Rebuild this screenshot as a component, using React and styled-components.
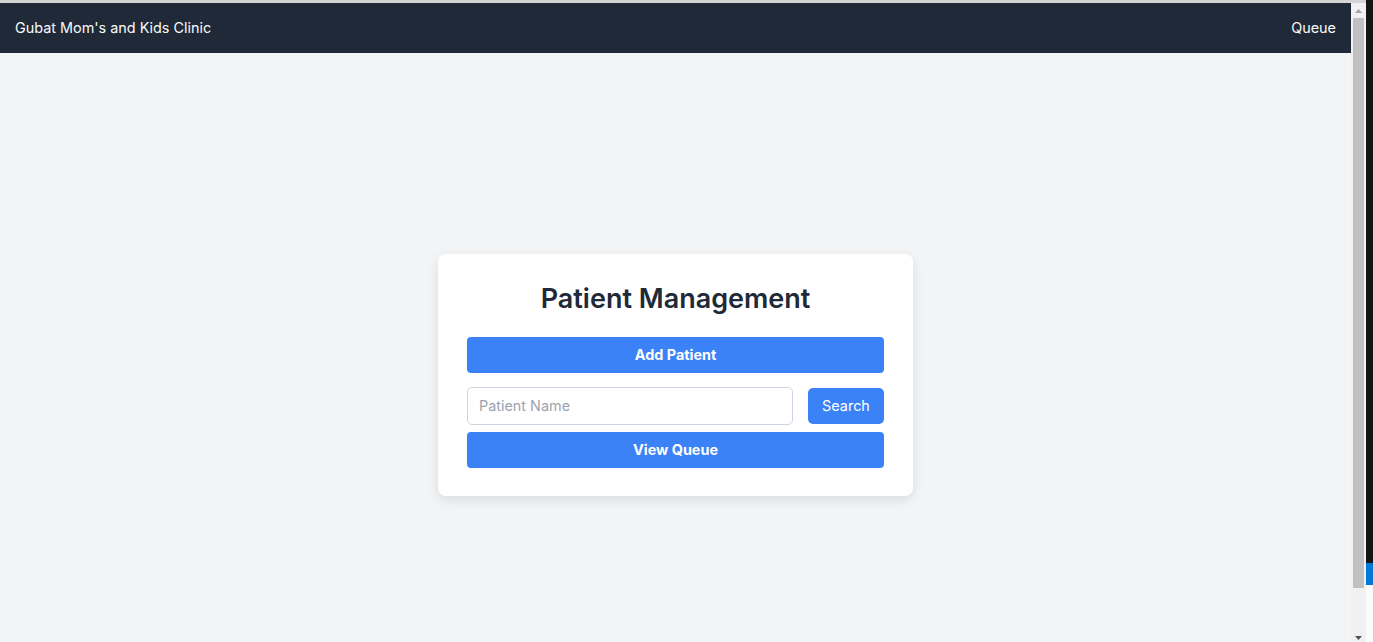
import React from "react";
import styled, { createGlobalStyle } from "styled-components";

const GlobalStyle = createGlobalStyle`
  html, body {
    margin: 0;
    height: 100%;
    overflow: hidden;
  }
  body {
    font-family: Inter, "Noto Sans", sans-serif;
    background: #f3f4f6;
  }
  * { box-sizing: border-box; }
`;

const Screen = styled.div`
  display: flex;
  height: 100vh;
  overflow: hidden;
`;

const Window = styled.div`
  flex: 1;
  display: flex;
  flex-direction: column;
  min-width: 0;
`;

const TopStrip = styled.div`
  height: 3px;
  flex-shrink: 0;
  background: #d4d4d4;
`;

const WindowBody = styled.div`
  flex: 1;
  display: flex;
  min-height: 0;
`;

const Viewport = styled.div`
  flex: 1;
  overflow: hidden;
  background: #f3f4f6;
`;

const Scrollbar = styled.div`
  width: 15px;
  flex-shrink: 0;
  background: #f1f1f1;
  display: flex;
  flex-direction: column;
  align-items: center;
`;

const ScrollArrow = styled.div`
  height: 15px;
  flex-shrink: 0;
  display: flex;
  align-items: ${(p) => (p.$down ? "flex-end" : "center")};
  justify-content: center;
  padding-bottom: ${(p) => (p.$down ? "2px" : "0")};
`;

const ScrollTrack = styled.div`
  flex: 1;
  width: 100%;
  display: flex;
  justify-content: center;
`;

const Thumb = styled.div`
  width: 11px;
  height: 570px;
  background: #c1c1c1;
`;

const Edge = styled.div`
  width: 7px;
  flex-shrink: 0;
  display: flex;
  flex-direction: column;
  background: #fbfbfb;
`;

const EdgeDark = styled.div`
  height: 563px;
  background: #151515;
`;

const EdgeBlue = styled.div`
  height: 22px;
  background: #0078d7;
`;

const Nav = styled.nav`
  height: 50px;
  background: #1f2937;
  color: #f9fafb;
  display: flex;
  align-items: center;
  justify-content: space-between;
  padding: 0 15px 1px;
  font-size: 14.4px;
`;

const Brand = styled.div`
  font-weight: 400;
`;

const NavLink = styled.a`
  color: #f9fafb;
  text-decoration: none;
`;

const Main = styled.main`
  min-height: 644px;
  display: flex;
  align-items: center;
  justify-content: center;
`;

const Card = styled.div`
  width: 475px;
  background: #ffffff;
  border-radius: 8px;
  box-shadow: 0 4px 12px rgba(0, 0, 0, 0.1);
  padding: 28px 29px 28px;
  display: flex;
  flex-direction: column;
`;

const Title = styled.h1`
  margin: 0 0 21px;
  height: 34px;
  line-height: 34px;
  text-align: center;
  font-size: 27px;
  font-weight: 600;
  color: #1f2937;
`;

const PrimaryButton = styled.button`
  height: 36px;
  width: 100%;
  border: none;
  border-radius: 4px;
  background: #3b82f6;
  color: #ffffff;
  font-family: inherit;
  font-size: 14.4px;
  font-weight: 700;
  padding: 0 0 1px;
  margin-top: ${(p) => p.$mt || 0}px;
  margin-bottom: ${(p) => p.$mb || 0}px;
`;

const SearchRow = styled.div`
  display: flex;
  align-items: center;
  gap: 15px;
`;

const Input = styled.input`
  flex: 1;
  min-width: 0;
  height: 38px;
  border: 1px solid #cbd5e1;
  border-radius: 5px;
  padding: 0 11px 1px;
  font-family: inherit;
  font-size: 14.4px;
  color: #1f2937;
  &::placeholder { color: #9ca3af; }
`;

const SearchButton = styled.button`
  width: 76px;
  height: 36px;
  border: none;
  border-radius: 5px;
  background: #3b82f6;
  color: #ffffff;
  font-family: inherit;
  font-size: 14.4px;
  font-weight: 400;
  padding: 0 0 1px;
`;

const Triangle = ({ down, color }) => (
  <svg width="7" height="4" viewBox="0 0 7 4">
    <path d={down ? "M0 0H7L3.5 4Z" : "M3.5 0L7 4H0Z"} fill={color} />
  </svg>
);

export default function App() {
  return (
    <>
      <GlobalStyle />
      <Screen>
        <Window>
          <TopStrip />
          <WindowBody>
            <Viewport>
              <Nav>
                <Brand>Gubat Mom's and Kids Clinic</Brand>
                <NavLink href="#">Queue</NavLink>
              </Nav>
              <Main>
                <Card>
                  <Title>Patient Management</Title>
                  <PrimaryButton $mb={14}>Add Patient</PrimaryButton>
                  <SearchRow>
                    <Input placeholder="Patient Name" />
                    <SearchButton>Search</SearchButton>
                  </SearchRow>
                  <PrimaryButton $mt={7}>View Queue</PrimaryButton>
                </Card>
              </Main>
            </Viewport>
            <Scrollbar>
              <ScrollArrow>
                <Triangle color="#a3a3a3" />
              </ScrollArrow>
              <ScrollTrack>
                <Thumb />
              </ScrollTrack>
              <ScrollArrow $down>
                <Triangle down color="#505050" />
              </ScrollArrow>
            </Scrollbar>
          </WindowBody>
        </Window>
        <Edge>
          <EdgeDark />
          <EdgeBlue />
        </Edge>
      </Screen>
    </>
  );
}
